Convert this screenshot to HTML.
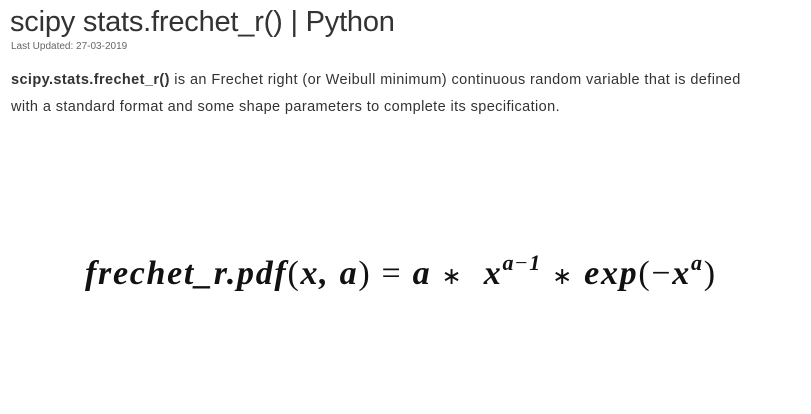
<!DOCTYPE html>
<html><head><meta charset="utf-8"><style>
body{margin:0;width:811px;height:414px;background:#fff;overflow:hidden;font-family:"Liberation Sans",sans-serif;position:relative}
h1{position:absolute;left:10px;top:6px;margin:0;font-weight:normal;font-size:29px;color:#333;letter-spacing:-0.2px}
.upd{position:absolute;left:11px;top:41px;font-size:10px;color:#666}
p{position:absolute;left:11px;top:67px;margin:0;width:760px;font-size:14.5px;line-height:27px;color:#333;letter-spacing:0.4px}
.f{position:absolute;left:85px;top:255px;font-family:"Liberation Serif",serif;font-style:italic;font-weight:bold;font-size:34px;color:#111;white-space:nowrap;letter-spacing:1.7px}
.f sup{font-size:22px;vertical-align:14px;line-height:0}
.u{font-style:normal;font-weight:normal}
.s{font-size:24px;font-style:normal;font-weight:normal}
</style></head><body>
<h1>scipy stats.frechet_r() | Python</h1>
<div class="upd">Last Updated: 27-03-2019</div>
<p><b>scipy.stats.frechet_r()</b> is an Frechet right (or Weibull minimum) continuous random variable that is defined with a standard format and some shape parameters to complete its specification.</p>
<div class="f">frechet_r.pdf<span class="u">(</span>x, a<span class="u">)</span> <span class="u">=</span> a <span class="s">∗</span>&nbsp; x<sup>a<span class="u">−</span>1</sup> <span class="s">∗</span> exp<span class="u">(−</span>x<sup>a</sup><span class="u">)</span></div>
</body></html>
